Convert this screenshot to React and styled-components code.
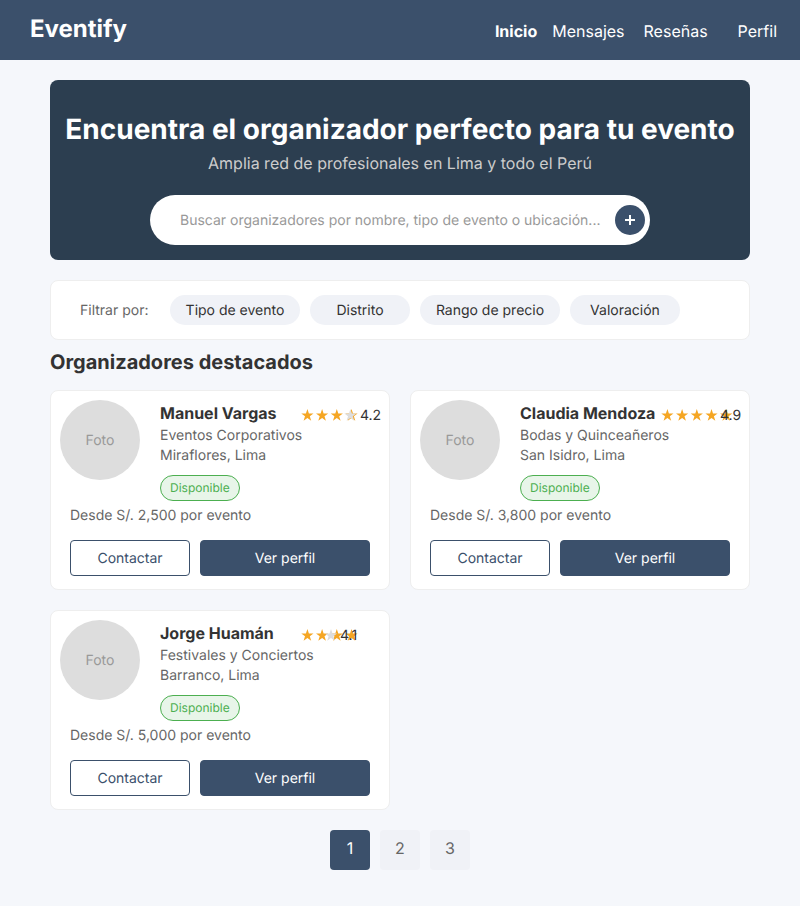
import React from "react";
import styled, { createGlobalStyle, css } from "styled-components";

const GlobalStyle = createGlobalStyle`
  *, *::before, *::after { box-sizing: border-box; }
  body {
    margin: 0;
    min-height: 100vh;
    background: #f5f7fb;
    color: #333333;
    font-family: Inter, "Liberation Sans", sans-serif;
    font-size: 14px;
    line-height: 20px;
    text-rendering: geometricPrecision;
  }
  button, input { font: inherit; text-rendering: inherit; }
  h1, h2, h3, p { margin: 0; }
`;

const Header = styled.header`
  display: flex;
  justify-content: space-between;
  height: 60px;
  padding: 0 23px 0 30px;
  background: #3b506b;
`;

const Brand = styled.a`
  padding-top: 13px;
  color: #ffffff;
  font-size: 24px;
  font-weight: 700;
  line-height: 32px;
  text-decoration: none;
`;

const Nav = styled.nav`
  display: flex;
  align-items: center;
  padding-top: 2px;
`;

const NavLink = styled.a`
  margin-left: ${({ $gap }) => $gap}px;
  color: #ffffff;
  font-size: 16px;
  font-weight: ${({ $active }) => ($active ? 700 : 400)};
  line-height: 24px;
  text-decoration: none;
`;

const Main = styled.main`
  max-width: 1100px;
  margin: 0 auto;
  padding: 20px 50px 36px;
`;

const Hero = styled.section`
  display: flex;
  flex-direction: column;
  align-items: center;
  padding: 32px 0 15px;
  border-radius: 8px;
  background: #2c3e50;
  text-align: center;
`;

const HeroTitle = styled.h1`
  color: #ffffff;
  font-size: 28px;
  font-weight: 700;
  line-height: 34px;
`;

const HeroText = styled.p`
  margin-top: 5px;
  color: #cccccc;
  font-size: 16px;
  line-height: 24px;
`;

const Search = styled.form`
  display: flex;
  align-items: center;
  width: calc(100% - 28px);
  max-width: 500px;
  height: 50px;
  margin-top: 20px;
  padding: 0 5px 0 30px;
  border-radius: 25px;
  background: #ffffff;
`;

const SearchInput = styled.input`
  flex: 1;
  min-width: 0;
  padding: 2px 0 0;
  border: 0;
  outline: 0;
  background: transparent;
  color: #333333;
  &::placeholder { color: #999999; opacity: 1; }
`;

const SearchButton = styled.button`
  display: grid;
  place-items: center;
  width: 30px;
  height: 30px;
  padding: 0;
  border: 0;
  border-radius: 50%;
  background: #3b506b;
`;

const panel = css`
  border: 1px solid #eeeeee;
  border-radius: 8px;
  background: #ffffff;
`;

const Filters = styled.section`
  ${panel}
  display: flex;
  flex-wrap: wrap;
  align-items: center;
  gap: 10px;
  margin-top: 20px;
  padding: 14px 29px;
`;

const FilterLabel = styled.span`
  width: 80px;
  padding-top: 2px;
  color: #666666;
`;

const FilterButton = styled.button`
  width: ${({ $width }) => $width}px;
  height: 30px;
  padding: 2px 0 0;
  border: 0;
  border-radius: 15px;
  background: #f0f2f7;
  color: #333333;
`;

const SectionTitle = styled.h2`
  margin: 8px 0 14px;
  font-size: 20px;
  font-weight: 700;
  line-height: 28px;
`;

const Cards = styled.section`
  display: grid;
  grid-template-columns: repeat(auto-fill, minmax(340px, 1fr));
  gap: 20px;
`;

const Card = styled.article`
  ${panel}
  padding: 9px 9px 13px;
`;

const Profile = styled.div`
  display: flex;
  gap: 20px;
`;

const Photo = styled.div`
  display: grid;
  flex: none;
  place-items: center;
  width: 80px;
  height: 80px;
  padding-top: 2px;
  border-radius: 50%;
  background: #dddddd;
  color: #999999;
`;

const Details = styled.div`
  flex: 1;
  min-width: 0;
  padding-top: 1px;
  color: #666666;
`;

const NameRow = styled.div`
  display: flex;
  justify-content: space-between;
  height: 25px;
  color: #333333;
  white-space: nowrap;
`;

const Name = styled.h3`
  font-size: 16px;
  font-weight: 700;
  line-height: 24px;
`;

const Rating = styled.div`
  display: grid;
  flex: none;
  width: 80px;
  padding-top: 5px;
  > * { grid-area: 1 / 1; }
`;

const Score = styled.span`
  padding-left: ${({ $inset }) => $inset}px;
`;

const Status = styled.span`
  display: block;
  width: fit-content;
  margin-top: 9px;
  padding: 2px 9px;
  border: 1px solid #4caf50;
  border-radius: 13px;
  background: #e8f5e9;
  color: #4caf50;
  font-size: 12px;
  line-height: 20px;
`;

const Price = styled.p`
  margin: 5px 10px 14px;
  color: #666666;
`;

const Actions = styled.div`
  display: grid;
  grid-template-columns: 12fr 17fr;
  gap: 10px;
  padding: 0 10px;
`;

const ActionButton = styled.button`
  height: 36px;
  padding: 2px 0 0;
  border: 1px solid #3b506b;
  border-radius: 4px;
  background: ${({ $primary }) => ($primary ? "#3b506b" : "#ffffff")};
  color: ${({ $primary }) => ($primary ? "#ffffff" : "#3b506b")};
`;

const Pagination = styled.nav`
  display: flex;
  justify-content: center;
  gap: 10px;
  margin-top: 20px;
`;

const PageButton = styled.button`
  width: 40px;
  height: 40px;
  padding: 0 0 4px;
  border: 0;
  border-radius: 4px;
  background: ${({ $active }) => ($active ? "#3b506b" : "#f0f2f7")};
  color: ${({ $active }) => ($active ? "#ffffff" : "#666666")};
  font-size: 16px;
`;

const STAR = "M0 -6.4L1.5 -2H6.1L2.4 0.7L3.8 5.2L0 2.5L-3.8 5.2L-2.4 0.7L-6.1 -2H-1.5Z";

function Stars({ filled, emptyAt }) {
  return (
    <svg width="80" height="20" viewBox="0 0 80 20" aria-hidden="true">
      {Array.from({ length: filled }, (_, i) => (
        <path key={i} d={STAR} fill="#f5a623" transform={`translate(${7.4 + i * 14.7} 9.5)`} />
      ))}
      {emptyAt && <path d={STAR} fill="#dddddd" transform={`translate(${emptyAt} 9.5)`} />}
    </svg>
  );
}

const links = [
  { label: "Inicio", gap: 0, active: true },
  { label: "Mensajes", gap: 15 },
  { label: "Reseñas", gap: 19 },
  { label: "Perfil", gap: 30 },
];

const filters = [
  { label: "Tipo de evento", width: 130 },
  { label: "Distrito", width: 100 },
  { label: "Rango de precio", width: 140 },
  { label: "Valoración", width: 110 },
];

const organizers = [
  { name: "Manuel Vargas", type: "Eventos Corporativos", place: "Miraflores, Lima", price: "2,500", score: "4.2", filled: 4, emptyAt: 50.4, inset: 60 },
  { name: "Claudia Mendoza", type: "Bodas y Quinceañeros", place: "San Isidro, Lima", price: "3,800", score: "4.9", filled: 5, inset: 60 },
  { name: "Jorge Huamán", type: "Festivales y Conciertos", place: "Barranco, Lima", price: "5,000", score: "4.1", filled: 4, emptyAt: 31, inset: 40 },
];

function OrganizerCard({ item }) {
  return (
    <Card>
      <Profile>
        <Photo>Foto</Photo>
        <Details>
          <NameRow>
            <Name>{item.name}</Name>
            <Rating>
              <Stars filled={item.filled} emptyAt={item.emptyAt} />
              <Score $inset={item.inset}>{item.score}</Score>
            </Rating>
          </NameRow>
          <p>{item.type}</p>
          <p>{item.place}</p>
          <Status>Disponible</Status>
        </Details>
      </Profile>
      <Price>Desde S/. {item.price} por evento</Price>
      <Actions>
        <ActionButton type="button">Contactar</ActionButton>
        <ActionButton type="button" $primary>Ver perfil</ActionButton>
      </Actions>
    </Card>
  );
}

export default function App() {
  return (
    <>
      <GlobalStyle />
      <Header>
        <Brand href="#">Eventify</Brand>
        <Nav>
          {links.map((link) => (
            <NavLink key={link.label} href="#" $gap={link.gap} $active={link.active}>
              {link.label}
            </NavLink>
          ))}
        </Nav>
      </Header>
      <Main>
        <Hero>
          <HeroTitle>Encuentra el organizador perfecto para tu evento</HeroTitle>
          <HeroText>Amplia red de profesionales en Lima y todo el Perú</HeroText>
          <Search onSubmit={(event) => event.preventDefault()}>
            <SearchInput
              type="text"
              aria-label="Buscar organizadores"
              placeholder="Buscar organizadores por nombre, tipo de evento o ubicación..."
            />
            <SearchButton type="submit" aria-label="Buscar">
              <svg width="10" height="10" viewBox="0 0 10 10" aria-hidden="true">
                <path d="M5 0V10M0 5H10" stroke="#ffffff" strokeWidth="2" />
              </svg>
            </SearchButton>
          </Search>
        </Hero>
        <Filters>
          <FilterLabel>Filtrar por:</FilterLabel>
          {filters.map((filter) => (
            <FilterButton key={filter.label} type="button" $width={filter.width}>
              {filter.label}
            </FilterButton>
          ))}
        </Filters>
        <SectionTitle>Organizadores destacados</SectionTitle>
        <Cards>
          {organizers.map((item) => (
            <OrganizerCard key={item.name} item={item} />
          ))}
        </Cards>
        <Pagination aria-label="Páginas">
          {[1, 2, 3].map((page) => (
            <PageButton key={page} type="button" $active={page === 1}>
              {page}
            </PageButton>
          ))}
        </Pagination>
      </Main>
    </>
  );
}
